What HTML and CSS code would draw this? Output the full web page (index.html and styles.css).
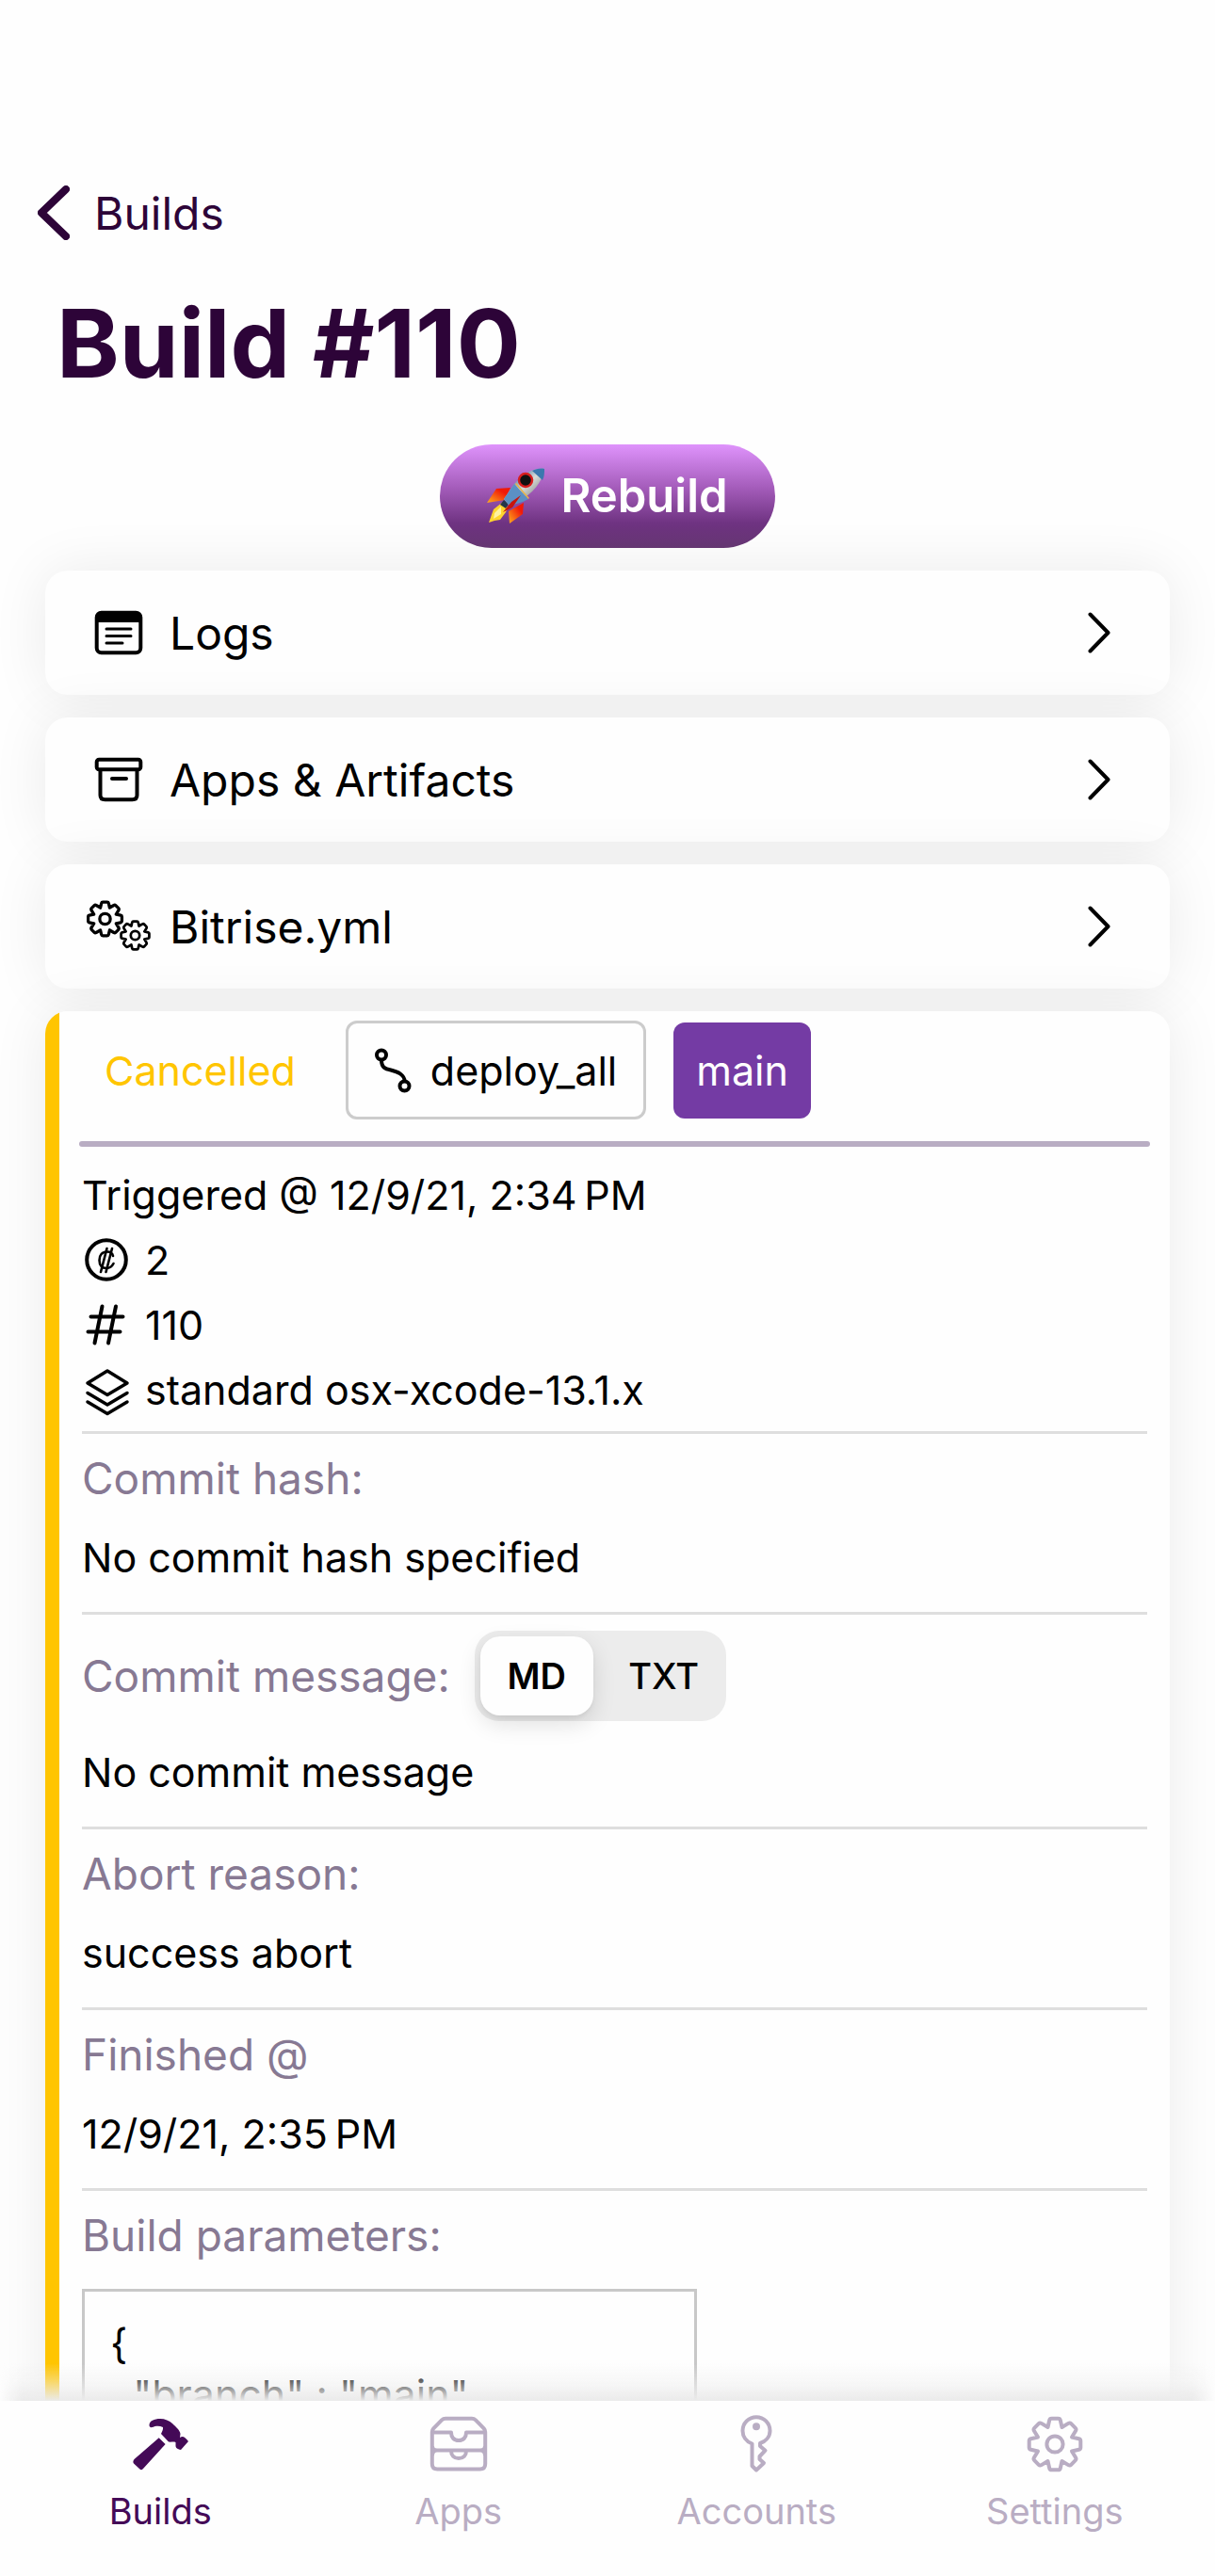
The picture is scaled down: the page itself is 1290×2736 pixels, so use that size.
FILE: index.html
```html
<!DOCTYPE html>
<html lang="en">
<head>
<meta charset="utf-8">
<meta name="viewport" content="width=device-width, initial-scale=1">
<title>Build #110</title>
<link rel="stylesheet" href="styles.css">
</head>
<body>
<svg class="sprite" aria-hidden="true">
  <symbol id="gear" viewBox="-32 -32 64 64">
    <path d="M-3.5-27.3H3.5Q5.4-27.3 5.8-25.5L7.5-18L14.3-22.1Q16-23 17.2-21.8L21.8-17.2Q23-16 22.1-14.3L18-7.5L25.5-5.8Q27.3-5.4 27.3-3.5V3.5Q27.3 5.4 25.5 5.8L18 7.5L22.1 14.3Q23 16 21.8 17.2L17.2 21.8Q16 23 14.3 22.1L7.5 18L5.8 25.5Q5.4 27.3 3.5 27.3H-3.5Q-5.4 27.3-5.8 25.5L-7.5 18L-14.3 22.1Q-16 23-17.2 21.8L-21.8 17.2Q-23 16-22.1 14.3L-18 7.5L-25.5 5.8Q-27.3 5.4-27.3 3.5V-3.5Q-27.3-5.4-25.5-5.8L-18-7.5L-22.1-14.3Q-23-16-21.8-17.2L-17.2-21.8Q-16-23-14.3-22.1L-7.5-18L-5.8-25.5Q-5.4-27.3-3.5-27.3Z"/>
    <circle r="8.6"/>
  </symbol>
  <symbol id="chevron" viewBox="0 0 24 44"><path d="M2.5 2.5L21.5 22L2.5 41.5"/></symbol>
</svg>

<main class="screen">
  <nav class="back-bar">
    <a class="back" href="#builds">
      <svg class="back-icon" width="34" height="58" viewBox="0 0 34 58"><path d="M30 4L4 29L30 54"/></svg>
      Builds
    </a>
  </nav>
  <h1 class="title">Build #110</h1>

  <button class="rebuild" type="button">
    <svg width="62" height="60" viewBox="0 0 62 60" aria-hidden="true">
      <defs>
        <linearGradient id="hull" x1="0" y1="0" x2="1" y2="1"><stop offset=".2" stop-color="#3f6d9c"/><stop offset=".5" stop-color="#d9dcd8"/><stop offset=".8" stop-color="#85898a"/></linearGradient>
        <linearGradient id="fin" x1="1" y1="0" x2="0" y2="1"><stop offset=".3" stop-color="#f01a08"/><stop offset="1" stop-color="#ffb020"/></linearGradient>
      </defs>
      <path d="M25 21L10 22L0 37L19 34Z" fill="url(#fin)"/>
      <path d="M39 37L38 49L24 59L23 46Z" fill="url(#fin)"/>
      <path d="M17 36L7 44L2 58L8 56L14 55L20 47L22 42Z" fill="#ffd52e"/>
      <path d="M15 41L8 48L7 54L15 49Z" fill="#fff3a0"/>
      <path d="M18 34L23 38L20 43L14 39Z" fill="#24354a"/>
      <path d="M61 1C49-1 37 7 29 17L18 33L23 39C41 34 58 20 61 1Z" fill="url(#hull)"/>
      <path d="M29 17L44 33C37 37 30 39 23 39L18 33Z" fill="#5b90c4"/>
      <path d="M61 1C57 0 52 1 48 3L59 13C61 9 61 5 61 1Z" fill="#3b78ae"/>
      <path d="M31 17L44 32" stroke="#e8b348" stroke-width="1.5" fill="none"/>
      <circle cx="41" cy="13" r="7" fill="#111" stroke="#d81e1e" stroke-width="2.5"/>
      <path d="M36 29L26 36L17 47L27 42Z" fill="#c8140c"/>
    </svg>
    Rebuild
  </button>

  <div class="stack">
    <a class="card link-card" href="#logs">
      <svg class="card-icon" viewBox="0 0 68 56">
        <rect x="10.700" y="6.700" width="46.600" height="42.600" rx="5"/>
        <path d="M10 17V11Q10 6 15 6H53Q58 6 58 11V17Z" fill="#000" stroke="none"/>
        <path d="M21 24H47M21 31.500H47M21 39H38" stroke-width="3"/>
      </svg>
      <span class="link-text">Logs</span>
      <svg class="chevron"><use href="#chevron"/></svg>
    </a>
    <a class="card link-card" href="#artifacts">
      <svg class="card-icon" viewBox="0 0 68 56">
        <rect x="10.700" y="6.700" width="46.600" height="10.600" rx="2.500"/>
        <path d="M14.500 18V44.500Q14.500 49.300 19.500 49.300H48.500Q53.500 49.300 53.500 44.500V18"/>
        <path d="M27 27H42" stroke-width="4"/>
      </svg>
      <span class="link-text">Apps &amp; Artifacts</span>
      <svg class="chevron"><use href="#chevron"/></svg>
    </a>
    <a class="card link-card" href="#yml">
      <svg class="card-icon gears" viewBox="0 0 68 56">
        <use href="#gear" x="-1.500" y="-1" width="42" height="42"/>
        <use href="#gear" x="34" y="20" width="35" height="35"/>
      </svg>
      <span class="link-text">Bitrise.yml</span>
      <svg class="chevron"><use href="#chevron"/></svg>
    </a>

    <article class="card details">
      <header class="chips">
        <span class="status">Cancelled</span>
        <span class="workflow">
          <svg width="39" height="48" viewBox="0 0 39 48"><circle cx="7" cy="7.500" r="5"/><circle cx="31.500" cy="40.500" r="5"/><path d="M7 13C7 26 18 21 27 27.500C31 30.500 31.500 32 31.500 35"/></svg>
          deploy_all
        </span>
        <span class="branch">main</span>
      </header>
      <hr class="rule">
      <ul class="facts">
        <li>Triggered @ 12/9/21, 2:34&#8239;PM</li>
        <li>
          <svg viewBox="0 0 46 48"><circle cx="23" cy="24" r="20.800"/><g stroke-width="2.600"><path d="M30 20Q29 15.500 24 15.500C18.500 15.500 15.500 19 15.500 24.500S18.500 33 23 33Q28 33 30.500 28"/><path d="M23.500 12L17 37M29 12L22.500 37"/></g></svg>
          2
        </li>
        <li>
          <svg viewBox="0 0 46 48"><path d="M18.500 4.500L10.500 43.500M33 4.500L25 43.500M6.500 15.500H40.500M3.500 31.500H37.500"/></svg>
          110
        </li>
        <li>
          <svg viewBox="0 0 46 48"><path d="M24 4L45 17L24 29.500L3 17ZM3 27.500L24 40L45 27.500M3 37L24 49.500L45 37" stroke-width="3.500"/></svg>
          standard osx-xcode-13.1.x
        </li>
      </ul>
      <section class="field">
        <h2 class="label">Commit hash:</h2>
        <p class="value">No commit hash specified</p>
      </section>
      <section class="field">
        <div class="label-row">
          <h2 class="label">Commit message:</h2>
          <div class="segmented" role="radiogroup" aria-label="Message format">
            <input type="radio" name="format" id="format-md" checked><label for="format-md">MD</label>
            <input type="radio" name="format" id="format-txt"><label for="format-txt">TXT</label>
          </div>
        </div>
        <p class="value">No commit message</p>
      </section>
      <section class="field">
        <h2 class="label">Abort reason:</h2>
        <p class="value">success abort</p>
      </section>
      <section class="field">
        <h2 class="label">Finished @</h2>
        <p class="value">12/9/21, 2:35&#8239;PM</p>
      </section>
      <section class="field">
        <h2 class="label">Build parameters:</h2>
        <pre class="params">{
  "branch" : "main"
}</pre>
      </section>
    </article>
  </div>
</main>

<nav class="tabs">
  <a class="tab active" href="#builds">
    <svg class="solid" viewBox="0 0 64 64"><path d="M20.500 12C20.500 7 26 5 32 5C37 5 42 7 45 10C49 14 53 17 53.500 21L53 25C56 23 58 24 62 29L54 38C51 37 49 37 48.500 34V30C46 29 44 30 41 29.500L33 21C34 19 35.500 16 35 14C31 12 27 12.500 24 14C21.500 14.500 20.500 13.500 20.500 12Z"/><path d="M30.700 25.300L37.600 32L14 58Q12.500 60 10.500 58.500L4 52.500Q2.500 50.500 4.500 48Z"/></svg>
    Builds
  </a>
  <a class="tab" href="#apps">
    <svg viewBox="0 0 64 64"><path d="M3.800 19C3.800 17.500 4.200 16.500 5.200 15.400L14 6.400Q15.700 4.700 18 4.700H46Q48.300 4.700 50 6.400L58.800 15.400C59.800 16.500 60.200 17.500 60.200 19V53Q60.200 58.500 54.500 58.500H9.500Q3.800 58.500 3.800 53ZM4 19.500H24C24 25 27 28 32 28S40 25 40 19.500H60M4 34Q4 38.500 9 38.500H55Q60 38.500 60 34M4 44Q4 38.500 9 38.500M60 44Q60 38.500 55 38.500M24 39C24 44 27 47 32 47S40 44 40 39"/></svg>
    Apps
  </a>
  <a class="tab" href="#accounts">
    <svg viewBox="0 0 64 64"><path d="M27.500 31.500C21 29 17.500 23.500 17.500 17.700A14.500 14.500 0 0 1 46.500 17.700C46.500 24 42 29 36 31V34L41.500 38.700L35.500 45V48L40 52L32 59.500L27.500 55Z"/><circle cx="32" cy="13.300" r="2"/></svg>
    Accounts
  </a>
  <a class="tab" href="#settings">
    <svg viewBox="0 0 64 64"><use href="#gear" width="64" height="64"/></svg>
    Settings
  </a>
</nav>
</body>
</html>
```
FILE: styles.css
```css
* { box-sizing: border-box; }

body {
  display: flex;
  flex-direction: column;
  height: 100vh;
  margin: 0;
  background: #fefefe;
  color: #000;
  font-family: Inter, "Liberation Sans", sans-serif;
  font-size: 43px;
}

a { color: inherit; text-decoration: none; }
h1, h2, p, pre, ul { margin: 0; padding: 0; }

svg {
  flex: none;
  fill: none;
  stroke: currentColor;
  stroke-width: 4;
  stroke-linecap: round;
  stroke-linejoin: round;
}

.sprite { position: absolute; width: 0; height: 0; }

.screen {
  display: flex;
  flex: 1;
  flex-direction: column;
  min-height: 0;
  padding: 176px 48px 0;
  overflow: hidden auto;
  scrollbar-width: none;
}

/* Header */

.back-bar { display: flex; flex: none; height: 100px; margin-left: -8px; }

.back {
  display: flex;
  align-items: center;
  gap: 26px;
  color: #2d0438;
  font-size: 48px;
}

.back-icon { stroke-width: 8; }

.title {
  flex: none;
  margin: 28px 12px 48px;
  color: #2d0438;
  font-size: 101px;
  font-weight: 700;
  line-height: 120px;
}

.rebuild {
  display: flex;
  flex: none;
  align-items: center;
  align-self: center;
  gap: 16px;
  height: 110px;
  margin-bottom: 24px;
  padding: 0 50px;
  border: 0;
  border-radius: 56px;
  background: linear-gradient(#df93fc, #a45cba 42%, #6f3382 76%, #663773);
  color: #fff;
  font: 600 49px/60px Inter, sans-serif;
}

.rebuild svg { stroke: none; }

/* Cards */

.stack { display: flex; flex: none; flex-direction: column; gap: 24px; }

.card {
  border-radius: 24px;
  background: #fefefe;
  box-shadow: 0 0 60px rgba(0, 0, 0, .08);
}

.link-card {
  display: flex;
  align-items: center;
  gap: 20px;
  height: 132px;
  padding: 0 63px 0 44px;
  font-size: 48px;
}

.link-text { flex: 1; }
.card-icon { width: 68px; height: 56px; stroke-width: 4; }
.gears { stroke-width: 5; }
.chevron { width: 24px; height: 44px; }

.details {
  padding: 10px 24px 60px 39px;
  background: linear-gradient(to right, #ffc500 15px, #fefefe 15px);
}

.chips { display: flex; align-items: center; gap: 29px; line-height: 60px; }
.status { padding: 0 24px; color: #ffc500; }

.workflow,
.branch {
  display: flex;
  align-items: center;
  border-radius: 12px;
}

.workflow {
  gap: 20px;
  height: 105px;
  padding: 0 28px;
  border: 3px solid #ccc;
}

.branch {
  height: 102px;
  padding: 0 24px;
  background: #743ba4;
  color: #fff;
}

.rule {
  height: 6px;
  margin: 23px -3px 16px;
  border: 0;
  border-radius: 3px;
  background: #b9adc3;
}

.facts { padding-bottom: 10px; list-style: none; }
.facts li { display: flex; align-items: center; gap: 18px; height: 69px; }
.facts svg { width: 46px; height: 48px; margin-left: 3px; overflow: visible; }

.field {
  display: flex;
  flex-direction: column;
  gap: 24px;
  padding: 17px 0 28px;
  border-top: 3px solid #dedede;
  line-height: 60px;
}

.label { color: #877993; font-size: 46px; font-weight: 400; }
.label-row { display: flex; align-items: center; gap: 26px; }

.segmented {
  display: flex;
  padding: 6px;
  border-radius: 26px;
  background: #ececec;
  font-size: 38px;
  line-height: 84px;
}

.segmented input { position: absolute; opacity: 0; }

.segmented label {
  width: 120px;
  border-radius: 21px;
  font-weight: 500;
  text-align: center;
}

.segmented label + input + label { margin-left: 15px; }

.segmented input:checked + label {
  background: #fefefe;
  box-shadow: 0 9px 24px rgba(0, 0, 0, .12), 0 3px 4px rgba(0, 0, 0, .05);
  font-weight: 600;
}

.params {
  align-self: flex-start;
  width: 653px;
  max-width: 100%;
  margin-top: 3px;
  padding: 28px 27px;
  border: 3px solid #c8c8c8;
  font: 43px/54px Inter, sans-serif;
}

/* Tab bar */

.tabs {
  position: relative;
  display: flex;
  flex: none;
  height: 186px;
  padding: 14px 12px 0;
  background: #fefefe;
}

.tabs::before {
  position: absolute;
  right: 0;
  bottom: 100%;
  left: 0;
  height: 40px;
  background: linear-gradient(rgba(240, 240, 240, 0), rgba(240, 240, 240, .4) 45%, #ebebeb);
  mask-image: linear-gradient(to right, transparent, #000 24px, #000 calc(100% - 24px), transparent);
  content: "";
}

.tab {
  display: flex;
  flex: 1;
  flex-direction: column;
  align-items: center;
  gap: 16px;
  color: #b9adc3;
  font-size: 38px;
  line-height: 46px;
}

.tab svg { width: 64px; height: 64px; }
.tab .solid { fill: currentColor; stroke: none; }
.tab.active { color: #440a57; }
```
